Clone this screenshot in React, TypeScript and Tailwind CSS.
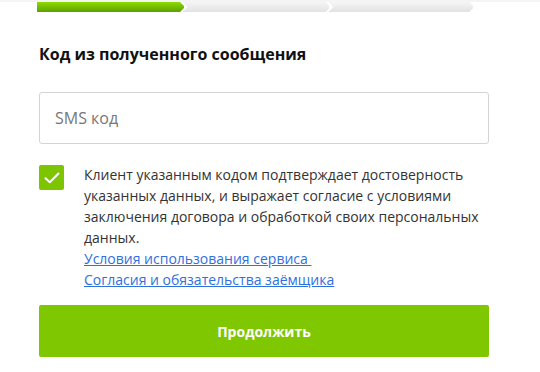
import React from "react";

export default function App() {
  return (
    <div className="w-[540px] h-[372px] bg-white overflow-hidden" style={{ fontFamily: '"Open Sans", sans-serif' }}>
      <div className="h-[2px] bg-[#f4f4f4]" />
      <div className="flex h-[10px] ml-[37px] w-[436px]">
        <div className="w-[148px] h-full bg-gradient-to-b from-[#8edc00] to-[#5c9f00] [clip-path:polygon(0_0,143px_0,148px_50%,143px_100%,0_100%)]" />
        <div className="w-[148px] -ml-[1px] h-full bg-gradient-to-b from-[#f5f5f5] to-[#e2e2e2] [clip-path:polygon(0_0,143px_0,148px_50%,143px_100%,0_100%,5px_50%)]" />
        <div className="w-[146px] -ml-[1px] h-full bg-gradient-to-b from-[#f5f5f5] to-[#e2e2e2] [clip-path:polygon(0_0,141px_0,146px_50%,141px_100%,0_100%,5px_50%)]" />
      </div>
      <div className="px-[39px] w-[528px]">
        <h1 className="mt-[31px] text-[16px] leading-[22px] font-bold text-[#111]">Код из полученного сообщения</h1>
        <div className="mt-[27px] h-[52px] border border-[#d4d4d4] rounded-[3px] flex items-center px-[15px]">
          <span className="text-[16px] text-[#777]">SMS код</span>
        </div>
        <div className="mt-[21px] flex">
          <div className="w-[25px] h-[25px] shrink-0 rounded-[2px] bg-[#7cc500] flex items-center justify-center">
            <svg width="16" height="12" viewBox="0 0 16 12" fill="none">
              <path d="M1.5 6.2 L5.8 10.2 L14.5 1.5" stroke="white" strokeWidth="2" strokeLinecap="round" strokeLinejoin="round" />
            </svg>
          </div>
          <div className="ml-[20px] text-[14px] leading-[21px] text-[#333] -mt-[1px]">
            <p>Клиент указанным кодом подтверждает достоверность указанных данных, и выражает согласие с условиями заключения договора и обработкой своих персональных данных.</p>
            <a className="block text-[#2f6fde] underline">Условия использования сервиса&nbsp;</a>
            <a className="block text-[#2f6fde] underline">Согласия и обязательства заёмщика</a>
          </div>
        </div>
        <button className="mt-[15px] w-full h-[52px] rounded-[2px] bg-[#7fc700] text-white font-bold text-[14px]">Продолжить</button>
      </div>
    </div>
  );
}
